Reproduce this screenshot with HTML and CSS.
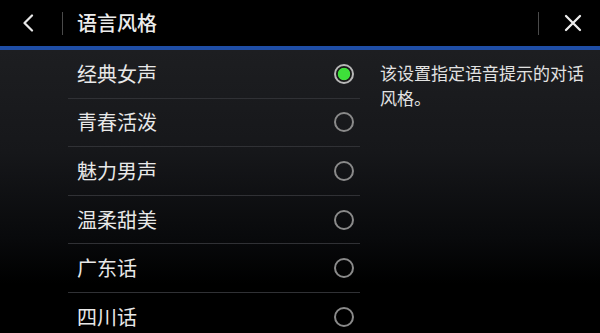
FILE: index.html
```html
<!DOCTYPE html>
<html lang="zh">
<head>
<meta charset="utf-8">
<link rel="stylesheet" href="styles.css">
</head>
<body>
<div class="screen">
  <header class="topbar">
    <svg class="back" width="12" height="18" viewBox="0 0 12 18"><path d="M10 1.5 L2.5 9 L10 16.5" fill="none" stroke="#e8e8e8" stroke-width="2.2" stroke-linecap="round" stroke-linejoin="round"/></svg>
    <span class="vdiv vdiv-left"></span>
    <h1 class="title">语言风格</h1>
    <span class="vdiv vdiv-right"></span>
    <svg class="close" width="18" height="18" viewBox="0 0 18 18"><path d="M2 2 L16 16 M16 2 L2 16" fill="none" stroke="#ececec" stroke-width="2.3" stroke-linecap="round"/></svg>
  </header>
  <main class="content">
    <ul class="options">
      <li class="option"><span class="label">经典女声</span><span class="radio checked"></span></li>
      <li class="option"><span class="label">青春活泼</span><span class="radio"></span></li>
      <li class="option"><span class="label">魅力男声</span><span class="radio"></span></li>
      <li class="option"><span class="label">温柔甜美</span><span class="radio"></span></li>
      <li class="option"><span class="label">广东话</span><span class="radio"></span></li>
      <li class="option"><span class="label">四川话</span><span class="radio"></span></li>
    </ul>
    <p class="desc">该设置指定语音提示的对话风格。</p>
  </main>
</div>
</body>
</html>
```
FILE: styles.css
```css
* { box-sizing: border-box; }
html, body { margin: 0; padding: 0; background: #000; }
body {
  width: 600px;
  height: 333px;
  overflow: hidden;
  font-family: "Noto Sans CJK SC", "Noto Sans", sans-serif;
  color: #e6e6e6;
}
.screen { width: 600px; height: 333px; display: flex; flex-direction: column; }
.topbar {
  height: 50px;
  flex: none;
  background: #000;
  border-bottom: 4px solid #1f4ea6;
  box-shadow: 0 1px 0 #14305f;
  display: flex;
  align-items: center;
  padding-left: 22px;
}
.back { flex: none; margin-top: -1px; }
.vdiv { width: 1px; height: 23px; background: #4a4a4a; flex: none; }
.vdiv-left { margin-left: 28px; }
.title {
  margin: 0 0 0 14px;
  font-size: 20px;
  font-weight: 500;
  color: #ececec;
  line-height: 1;
  flex: 1;
}
.vdiv-right { margin-right: 25px; }
.close { flex: none; margin-right: 18px; }
.content {
  flex: 1;
  display: flex;
  background: linear-gradient(180deg, #1d1e21 0%, #16171a 35%, #08090b 65%, #000 80%);
}
.options {
  list-style: none;
  margin: 0 0 0 68px;
  padding: 0;
  width: 292px;
  flex: none;
}
.option {
  height: 48.6px;
  border-bottom: 1px solid #303135;
  display: flex;
  align-items: center;
  justify-content: space-between;
  padding: 0 6px 0 9px;
}
.label { font-size: 20px; color: #e8e8e8; line-height: 1; }
.radio {
  width: 20px;
  height: 20px;
  border-radius: 50%;
  border: 2px solid #8a8a8a;
  flex: none;
}
.radio.checked {
  border-color: #b8b8b8;
  background: radial-gradient(circle, #3ee03a 0 5.8px, #1a1a1a 6.6px);
}
.desc {
  margin: 0 0 0 20px;
  padding-top: 10px;
  width: 210px;
  font-size: 17px;
  line-height: 25px;
  color: #e2e2e2;
}
```
